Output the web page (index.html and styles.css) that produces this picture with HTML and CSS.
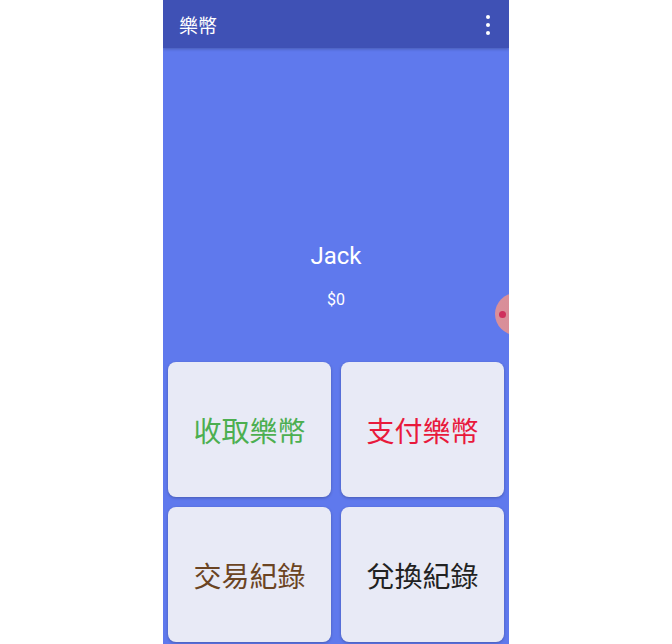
FILE: index.html
```html
<!DOCTYPE html>
<html lang="zh-Hant">
<head>
<meta charset="utf-8">
<title>樂幣</title>
<link rel="stylesheet" href="styles.css">
</head>
<body>
<div class="page">
  <div class="phone">
    <header class="appbar">
      <span class="title">樂幣</span>
      <span class="menu"><i></i><i></i><i></i></span>
    </header>
    <section class="hero">
      <div class="name">Jack</div>
      <div class="balance">$0</div>
    </section>
    <section class="grid">
      <div class="card green">收取樂幣</div>
      <div class="card red">支付樂幣</div>
      <div class="card brown">交易紀錄</div>
      <div class="card dark">兌換紀錄</div>
    </section>
    <div class="bubble"><span class="dot"></span></div>
  </div>
</div>
</body>
</html>
```
FILE: styles.css
```css
html, body {
  margin: 0;
  padding: 0;
  background: #ffffff;
}
.page {
  display: flex;
  justify-content: center;
  height: 644px;
  overflow: hidden;
}
.phone {
  position: relative;
  width: 346px;
  height: 644px;
  overflow: hidden;
  background: #5f79ed;
  display: flex;
  flex-direction: column;
  font-family: Roboto, "Noto Sans CJK TC", sans-serif;
}
.appbar {
  height: 48px;
  flex: none;
  background: #3f51b5;
  display: flex;
  align-items: center;
  justify-content: space-between;
  padding: 0 19px 0 16px;
  box-shadow: 0 1px 3px rgba(0, 0, 0, 0.25);
  position: relative;
  z-index: 1;
}
.title {
  color: #ffffff;
  font-family: "Noto Sans CJK TC", sans-serif;
  font-size: 19px;
  line-height: 24px;
  padding-top: 2px;
}
.menu {
  display: flex;
  flex-direction: column;
  gap: 4px;
  margin-top: 1px;
}
.menu i {
  display: block;
  width: 4px;
  height: 4px;
  border-radius: 50%;
  background: #ffffff;
}
.hero {
  height: 309px;
  flex: none;
  display: flex;
  flex-direction: column;
  align-items: center;
  padding-top: 194px;
  box-sizing: border-box;
  color: #ffffff;
}
.name {
  font-size: 24px;
  line-height: 28px;
}
.balance {
  font-size: 16px;
  line-height: 20px;
  margin-top: 20px;
}
.grid {
  display: grid;
  grid-template-columns: 1fr 1fr;
  grid-auto-rows: 135px;
  gap: 10px;
  padding: 5px;
}
.card {
  background: #e8eaf6;
  border-radius: 8px;
  box-shadow: 0 1px 3px rgba(0, 0, 0, 0.25);
  display: flex;
  align-items: center;
  justify-content: center;
  font-family: "Noto Sans CJK TC", sans-serif;
  font-size: 28px;
}
.green { color: #4caf50; }
.red { color: #e8193c; }
.brown { color: #6b4423; }
.dark { color: #222222; }
.bubble {
  position: absolute;
  left: 332px;
  top: 293px;
  width: 42px;
  height: 42px;
  border-radius: 50%;
  background: radial-gradient(circle, #d98c98 0%, #d98f99 70%, #cf8aa6 100%);
}
.dot {
  position: absolute;
  left: 4px;
  top: 18px;
  width: 7px;
  height: 7px;
  border-radius: 50%;
  background: #cf2f5c;
}
```
